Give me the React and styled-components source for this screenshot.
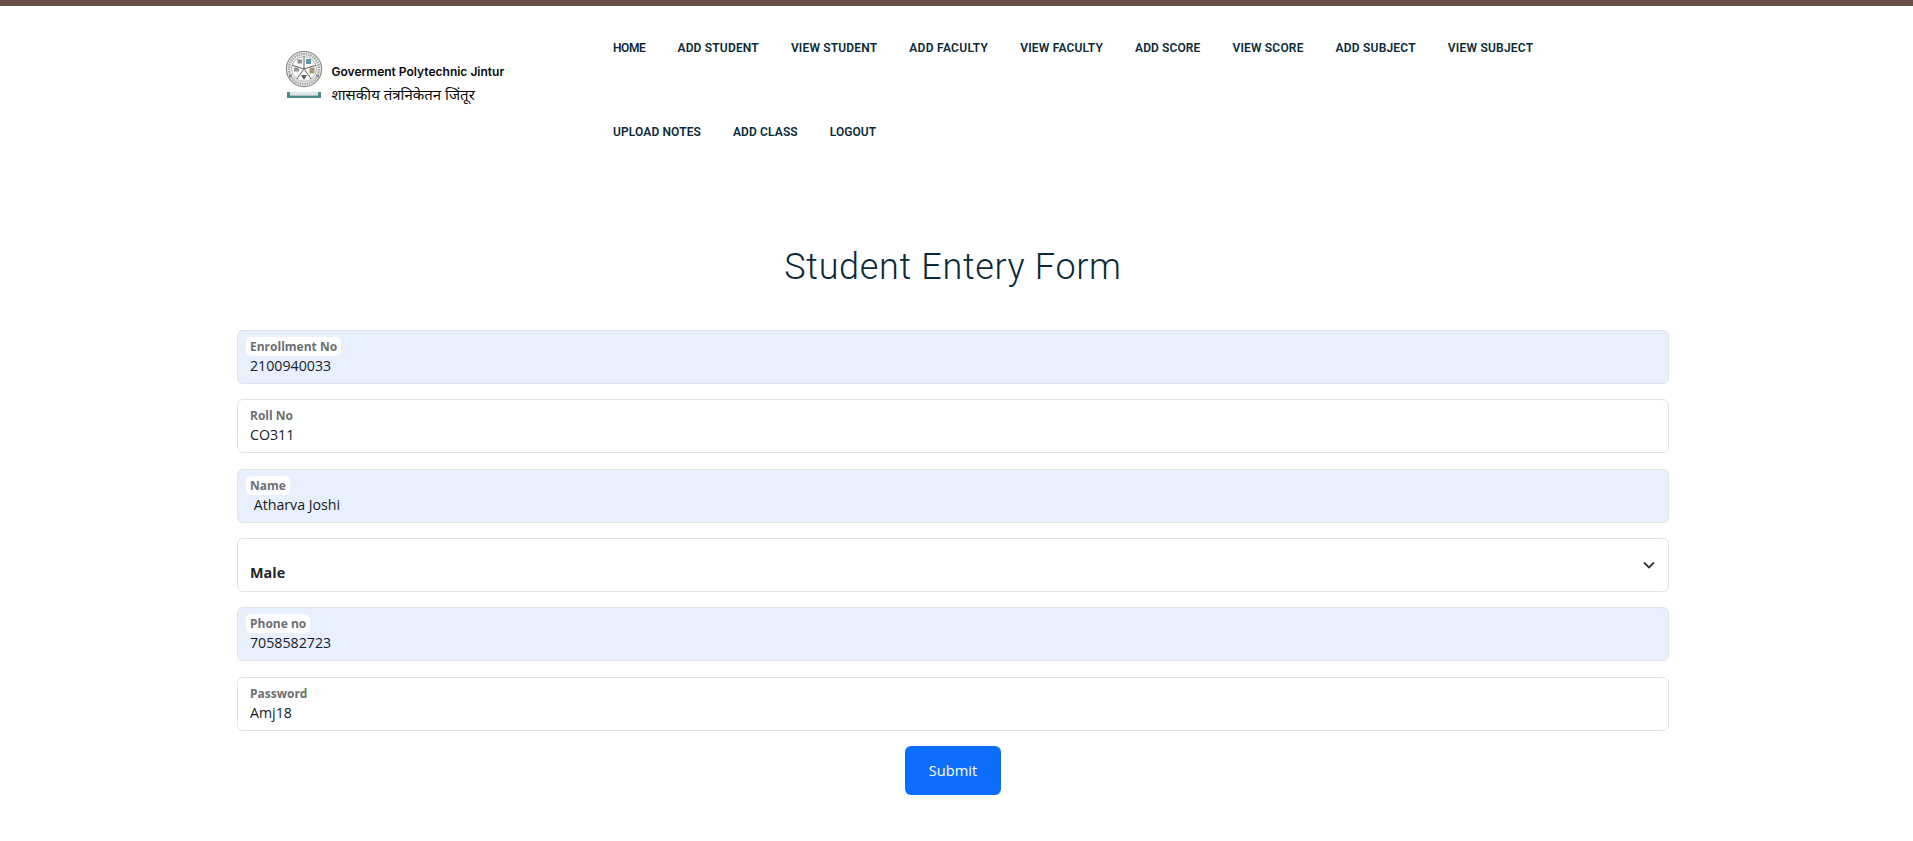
import React from "react";
import styled, { createGlobalStyle } from "styled-components";

const Global = createGlobalStyle`
  html, body { margin: 0; padding: 0; background: #fff; }
  body { font-family: "Open Sans", "Noto Sans", sans-serif; color: #212529; }
  * { box-sizing: border-box; }
`;
const Page = styled.div`
  width: 1913px;
  min-height: 841px;
  border-top: 6px solid #6a4d47;
`;
const Header = styled.header`
  display: flex;
  align-items: flex-start;
  height: 168px;
  padding-left: 285px;
`;
const Brand = styled.div`
  display: flex;
  align-items: flex-start;
  width: 328px;
  padding-top: 45px;
  flex-shrink: 0;
`;
const BrandText = styled.div`
  display: flex;
  flex-direction: column;
  margin: 13px 0 0 8.5px;
`;
const BrandEn = styled.span`
  font: 600 12px/16px Inter, sans-serif;
  color: #0a0a0a;
  white-space: nowrap;
`;
const BrandHi = styled.span`
  font: 400 15px/22px "Noto Sans", "Noto Sans Devanagari", "Lohit Devanagari", serif;
  color: #0a0a0a;
  white-space: nowrap;
  margin-top: 3px;
`;
const Nav = styled.nav`
  display: flex;
  flex-wrap: wrap;
  width: 960px;
  column-gap: 32px;
`;
const NavItem = styled.a`
  display: block;
  height: 84px;
  padding-top: 34px;
  font: 600 12px/16px Roboto, sans-serif;
  letter-spacing: ${(p) => p.$spacing}px;
  color: #0a2a38;
  white-space: nowrap;
`;
const Main = styled.main`
  width: 1432px;
  margin-left: 237px;
`;
const Title = styled.h1`
  margin: 0;
  padding: 70px 0 0;
  height: 156px;
  text-align: center;
  font: 300 36px/46px Roboto, sans-serif;
  letter-spacing: 0.68px;
  color: #0a2a38;
`;
const Field = styled.div`
  display: flex;
  flex-direction: column;
  align-items: flex-start;
  height: 54px;
  margin-bottom: 15.32px;
  padding: 6px 8px 0 8px;
  border: 1px solid ${(p) => (p.$filled ? "#dde2ea" : "#dee2e6")};
  border-radius: 6px;
  background: ${(p) => (p.$filled ? "#e8f0fe" : "#fff")};
`;
const Label = styled.label`
  padding: 0 4px;
  border-radius: 5px;
  background: ${(p) => (p.$filled ? "#fff" : "transparent")};
  font: 700 12px/19px "Open Sans", sans-serif;
  color: #6c6f73;
  white-space: nowrap;
`;
const Value = styled.input`
  width: 100%;
  height: 20px;
  border: 0;
  outline: 0;
  padding: 0 4px;
  background: transparent;
  font: 400 14.2px/20px "Open Sans", sans-serif;
  color: #16202a;
`;
const SelectBox = styled.div`
  display: flex;
  align-items: flex-end;
  justify-content: space-between;
  height: 54px;
  margin-bottom: 15.32px;
  padding: 0 11px 6px 12px;
  border: 1px solid #dee2e6;
  border-radius: 6px;
  font: 700 14.4px/24px "Open Sans", sans-serif;
  color: #212529;
`;
const Chevron = styled.svg`
  width: 16px;
  height: 16px;
  margin-bottom: 12px;
`;
const Actions = styled.div`
  display: flex;
  justify-content: center;
`;
const SubmitButton = styled.button`
  width: 96px;
  height: 49px;
  border: 0;
  border-radius: 6px;
  background: #0d6efd;
  color: #fff;
  font: 400 14.6px/24px "Open Sans", sans-serif;
`;
const Logo = () => (
  <svg width="38" height="48" viewBox="0 0 38 48" fill="none">
    <circle cx="19" cy="18" r="17.6" fill="#ececea" stroke="#8f8f8d" strokeWidth="1.2" />
    <circle cx="19" cy="18" r="15" fill="none" stroke="#7d7d7b" strokeWidth="2.4" strokeDasharray="1.4 1" opacity="0.65" />
    <circle cx="19" cy="18" r="12.4" fill="#f7f7f5" stroke="#a4a4a2" strokeWidth="0.8" />
    <path d="M19 18 19 5.6M19 18 30.8 14.2M19 18 26.3 28M19 18 11.7 28M19 18 7.2 14.2" stroke="#666664" strokeWidth="1" />
    <rect x="21" y="8" width="5" height="5" fill="#5d9ab0" />
    <rect x="12.5" y="8.5" width="4.5" height="4" fill="#8b8f92" />
    <rect x="24.5" y="16.5" width="5" height="6" fill="#a79b78" />
    <rect x="9" y="16.5" width="5" height="4" fill="#9a9a98" />
    <path d="M16 24l3 5 3-5z" fill="#5e5e5c" />
    <circle cx="5.5" cy="25" r="1.6" fill="#8d84a3" />
    <circle cx="32.5" cy="25" r="1.6" fill="#8d84a3" />
    <path d="M2 41h34v6H2z" fill="#4f8b8a" />
    <path d="M5 41h28v3.6H5z" fill="#dfe5e3" />
  </svg>
);

const links = [
  ["HOME", -0.4],
  ["ADD STUDENT", 0.18],
  ["VIEW STUDENT", 0.16],
  ["ADD FACULTY", 0.3],
  ["VIEW FACULTY", 0.18],
  ["ADD SCORE", 0.1],
  ["VIEW SCORE", 0.18],
  ["ADD SUBJECT", 0.2],
  ["VIEW SUBJECT", 0.22],
  ["UPLOAD NOTES", 0.12],
  ["ADD CLASS", 0.12],
  ["LOGOUT", 0.05],
];

const Input = ({ label, value, filled }) => (
  <Field $filled={filled}>
    <Label $filled={filled}>{label}</Label>
    <Value readOnly value={value} />
  </Field>
);

export default function App() {
  return (
    <Page>
      <Global />
      <Header>
        <Brand>
          <Logo />
          <BrandText>
            <BrandEn>Goverment Polytechnic Jintur</BrandEn>
            <BrandHi>शासकीय तंत्रनिकेतन जिंतूर</BrandHi>
          </BrandText>
        </Brand>
        <Nav>
          {links.map(([text, spacing]) => (
            <NavItem key={text} $spacing={spacing}>{text}</NavItem>
          ))}
        </Nav>
      </Header>
      <Main>
        <Title>Student Entery Form</Title>
        <Input label="Enrollment No" value="2100940033" filled />
        <Input label="Roll No" value="CO311" />
        <Input label="Name" value=" Atharva Joshi" filled />
        <SelectBox>
          Male
          <Chevron viewBox="0 0 16 16" fill="none" stroke="#343a40" strokeWidth="1.8" strokeLinecap="round" strokeLinejoin="round">
            <path d="M3.5 6 8 10.5 12.5 6" />
          </Chevron>
        </SelectBox>
        <Input label="Phone no" value="7058582723" filled />
        <Input label="Password" value="Amj18" />
        <Actions>
          <SubmitButton>Submit</SubmitButton>
        </Actions>
      </Main>
    </Page>
  );
}
